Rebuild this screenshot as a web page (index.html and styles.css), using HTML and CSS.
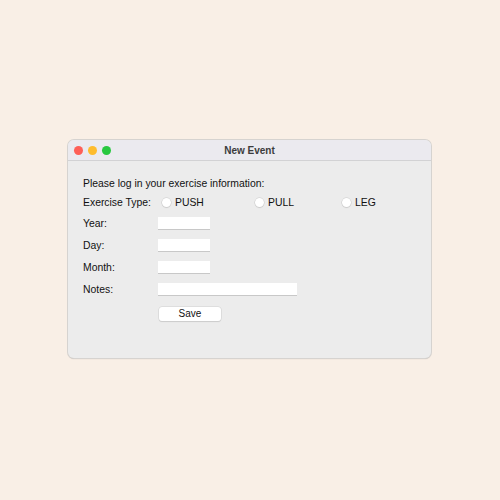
FILE: index.html
```html
<!DOCTYPE html>
<html>
<head>
<meta charset="utf-8">
<link rel="stylesheet" href="styles.css">
</head>
<body>
<div class="window">
  <div class="titlebar">
    <div class="lights">
      <span class="light red"></span>
      <span class="light yellow"></span>
      <span class="light green"></span>
    </div>
    <div class="title">New Event</div>
  </div>
  <div class="content">
    <div class="intro">Please log in your exercise information:</div>
    <div class="row type-row">
      <span class="label">Exercise Type:</span>
      <div class="radios">
        <span class="radio r-push"><span class="dot"></span>PUSH</span>
        <span class="radio r-pull"><span class="dot"></span>PULL</span>
        <span class="radio r-leg"><span class="dot"></span>LEG</span>
      </div>
    </div>
    <div class="row field-row">
      <span class="label">Year:</span>
      <span class="field short"></span>
    </div>
    <div class="row field-row">
      <span class="label">Day:</span>
      <span class="field short"></span>
    </div>
    <div class="row field-row">
      <span class="label">Month:</span>
      <span class="field short"></span>
    </div>
    <div class="row field-row">
      <span class="label">Notes:</span>
      <span class="field long"></span>
    </div>
    <div class="row btn-row">
      <span class="label"></span>
      <span class="button">Save</span>
    </div>
  </div>
</div>
</body>
</html>
```
FILE: styles.css
```css
html, body {
  margin: 0;
  padding: 0;
}
body {
  width: 500px;
  height: 500px;
  background: #f9efe6;
  font-family: "Liberation Sans", Arial, sans-serif;
  font-size: 10.4px;
  color: #111;
  padding-top: 140px;
  padding-left: 68px;
  box-sizing: border-box;
}
.window {
  width: 363px;
  height: 218px;
  background: #ececec;
  border-radius: 6px;
  box-shadow: 0 0 0 1px #d6d3d0, 0 1px 1px rgba(0,0,0,0.25);
  overflow: hidden;
  display: flex;
  flex-direction: column;
}
.titlebar {
  height: 20px;
  flex: none;
  background: #ebeaef;
  border-bottom: 1px solid #d2d2d4;
  position: relative;
  display: flex;
  align-items: center;
  justify-content: center;
}
.lights {
  position: absolute;
  left: 6px;
  top: 6px;
  display: flex;
  gap: 5px;
}
.light {
  width: 9px;
  height: 9px;
  border-radius: 50%;
}
.red { background: #fe5f57; }
.yellow { background: #febc2e; }
.green { background: #28c840; }
.title {
  font-weight: bold;
  font-size: 10px;
  color: #3c3c3c;
}
.content {
  padding: 16px 0 0 15px;
  display: flex;
  flex-direction: column;
}
.intro {
  height: 14px;
  line-height: 14px;
  margin-bottom: 3px;
}
.row {
  display: flex;
  align-items: center;
}
.label {
  width: 75px;
  flex: none;
}
.type-row {
  height: 16px;
  margin-bottom: 7px;
}
.radios {
  display: flex;
}
.radio {
  display: flex;
  align-items: center;
  gap: 4px;
  flex: none;
}
.r-push { width: 93px; margin-left: 4px; }
.r-pull { width: 87px; }
.dot {
  width: 9px;
  height: 9px;
  border-radius: 50%;
  background: #fff;
  box-shadow: 0 0 0 0.5px #c9c9c9, 0 1px 1px rgba(0,0,0,0.12);
}
.field-row {
  height: 13px;
  margin-bottom: 9px;
}
.field {
  height: 12px;
  background: #fff;
  border-bottom: 1px solid #c8c8c8;
}
.short { width: 52px; }
.long { width: 139px; }
.btn-row {
  margin-top: 2px;
  height: 14px;
}
.button {
  width: 62px;
  height: 14px;
  margin-left: 1px;
  background: #fff;
  border-radius: 3px;
  box-shadow: 0 0 0 0.5px #cfcfcf, 0 1px 1px rgba(0,0,0,0.15);
  text-align: center;
  line-height: 14px;
  font-size: 10px;
}
```
